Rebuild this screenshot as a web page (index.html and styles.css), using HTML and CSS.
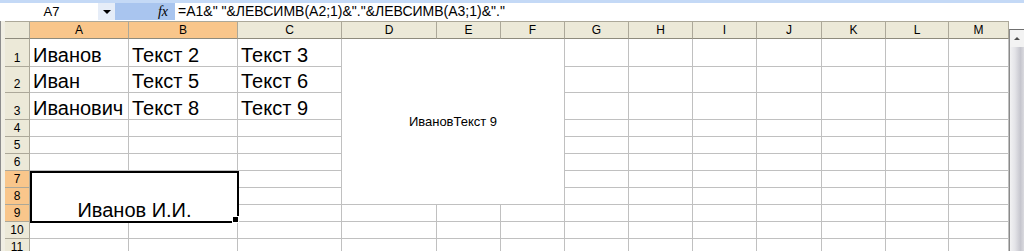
FILE: index.html
```html
<!DOCTYPE html>
<html lang="ru">
<head>
    <meta charset="UTF-8" />
    <title>Книга1 - Лист1</title>
    <link rel="stylesheet" href="styles.css">
</head>
<body>
    <div class="top-strip"></div>

    <!-- FORMULA BAR -->
    <div class="formula-bar">
        <div class="name-box">A7</div>
        <div class="name-drop"><span class="arrow"></span></div>
        <div class="fx-zone"><span class="fx">fx</span></div>
        <div class="formula">=A1&amp;" "&amp;ЛЕВСИМВ(A2;1)&amp;"."&amp;ЛЕВСИМВ(A3;1)&amp;"."</div>
    </div>

    <!-- SHEET -->
    <div class="workspace">
        <div class="frame-left"></div>
        <div class="sheet" id="sheet"></div>
        <div class="vscroll">
            <div class="scroll-btn"><span class="up"></span></div>
            <div class="scroll-track"></div>
        </div>
    </div>

    <script>
        const cols = ["A", "B", "C", "D", "E", "F", "G", "H", "I", "J", "K", "L", "M"];
        const rowCount = 11;

        const data = {
            A1: "Иванов", B1: "Текст 2", C1: "Текст 3",
            A2: "Иван", B2: "Текст 5", C2: "Текст 6",
            A3: "Иванович", B3: "Текст 8", C3: "Текст 9",
        };

        // merged ranges: c1..c2 are column indexes, r1..r2 row numbers
        const merged = [
            { cls: "merge-d", text: "ИвановТекст 9", c1: 3, c2: 5, r1: 1, r2: 8 },
            { cls: "merge-a", text: "Иванов И.И.", c1: 0, c2: 1, r1: 7, r2: 9 },
        ];

        const selCols = ["A", "B"];
        const selRows = [7, 8, 9];

        const sheet = document.getElementById("sheet");

        function add(cls, text) {
            const div = document.createElement("div");
            div.className = cls;
            if (text) div.innerHTML = "<span>" + text + "</span>";
            sheet.appendChild(div);
            return div;
        }

        add("hd corner");
        cols.forEach((c) => {
            add("hd col-hd" + (selCols.includes(c) ? " sel" : ""), c);
        });

        for (let r = 1; r <= rowCount; r++) {
            add("hd row-hd" + (selRows.includes(r) ? " sel" : ""), String(r));
            cols.forEach((c, ci) => {
                const m = merged.find((m) => ci >= m.c1 && ci <= m.c2 && r >= m.r1 && r <= m.r2);
                if (m) {
                    if (ci === m.c1 && r === m.r1) {
                        const cell = add("cell merge " + m.cls, m.text);
                        if (m.cls === "merge-a") {
                            const handle = document.createElement("i");
                            handle.className = "fill-handle";
                            cell.appendChild(handle);
                        }
                    }
                    return;
                }
                const text = data[c + r];
                add("cell" + (text ? " big" : ""), text);
            });
        }
    </script>
</body>
</html>
```

FILE: styles.css
```css
* {
    box-sizing: border-box;
}
body {
    margin: 0;
    width: 1024px;
    height: 251px;
    overflow: hidden;
    background: #fff;
    font-family: "Liberation Sans", Arial, sans-serif;
    color: #000;
}
.top-strip {
    height: 3px;
    background: #c4d9f6;
}

/* Formula bar */
.formula-bar {
    display: flex;
    height: 17px;
    font-size: 13px;
    line-height: 17px;
}
.name-box {
    width: 98px;
    padding-left: 5px;
    text-align: center;
    background: #fff;
}
.name-drop {
    width: 17px;
    background: #e6edf8;
    display: flex;
    align-items: center;
    justify-content: center;
}
.arrow {
    width: 0;
    height: 0;
    border-left: 4px solid transparent;
    border-right: 4px solid transparent;
    border-top: 4px solid #000;
}
.fx-zone {
    width: 60px;
    background: #a9c5ef;
    text-align: right;
    padding-right: 7px;
}
.fx {
    font-family: "Liberation Serif", "Times New Roman", serif;
    font-style: italic;
    font-size: 14px;
}
.formula {
    flex: 1;
    padding-left: 3px;
    background: #fff;
    white-space: nowrap;
    font-size: 14px;
}

/* Sheet */
.workspace {
    display: flex;
    margin-top: 1px;
}
.frame-left {
    width: 5px;
    height: 240px;
    border-left: 1px solid #8d8d8d;
    background: #f1efe4;
}
.sheet {
    display: grid;
    grid-template-columns: 25px 99px 109px 104px 95px 64px 64px 64px 64px 64px 65px 64px 63px 60px;
    grid-template-rows: 18px 28px 26px 27px repeat(8, 17px);
}
.hd {
    background: #ece9d8;
    border-right: 1px solid #aca899;
    border-bottom: 1px solid #aca899;
    font-size: 12px;
    display: flex;
    justify-content: center;
    align-items: flex-end;
    line-height: 14px;
    padding-bottom: 1px;
}
.col-hd,
.corner {
    border-top: 1px solid #aca899;
    border-bottom-color: #8e8b7d;
}
.hd.sel {
    background: #f9c68b;
}
.cell {
    background: #fff;
    border-right: 1px solid #c0c0c0;
    border-bottom: 1px solid #c0c0c0;
}
.cell.big {
    display: flex;
    align-items: flex-end;
    padding-left: 3px;
    font-size: 20px;
    line-height: 22px;
    white-space: nowrap;
}
.merge {
    display: flex;
    justify-content: center;
    white-space: nowrap;
}
.merge-d {
    grid-column: 5 / 8;
    grid-row: 2 / 10;
    align-items: center;
    font-size: 13px;
}
.merge-a {
    grid-column: 2 / 4;
    grid-row: 8 / 11;
    position: relative;
    align-items: flex-end;
    border: 2px solid #000;
    margin-right: -1px;
    margin-bottom: -1px;
    font-size: 20px;
    line-height: 22px;
}
.fill-handle {
    position: absolute;
    right: -1px;
    bottom: -1px;
    width: 5px;
    height: 5px;
    background: #000;
    outline: 1px solid #fff;
}

/* Vertical scrollbar (cut by the window edge) */
.vscroll {
    width: 15px;
    margin-top: 8px;
    border-top: 1px solid #6f6f6f;
    border-left: 1px solid #8a8a8a;
    display: flex;
    flex-direction: column;
}
.scroll-btn {
    height: 17px;
    background: #f3f3f3;
    display: flex;
    justify-content: center;
    align-items: center;
}
.up {
    width: 0;
    height: 0;
    border-left: 3px solid transparent;
    border-right: 3px solid transparent;
    border-bottom: 3px solid #4d4d4d;
}
.scroll-track {
    height: 220px;
    background: linear-gradient(to right, #f2f2f3, #e4e4e8 35%, #c6c6ce 75%, #dadadf);
}
```
